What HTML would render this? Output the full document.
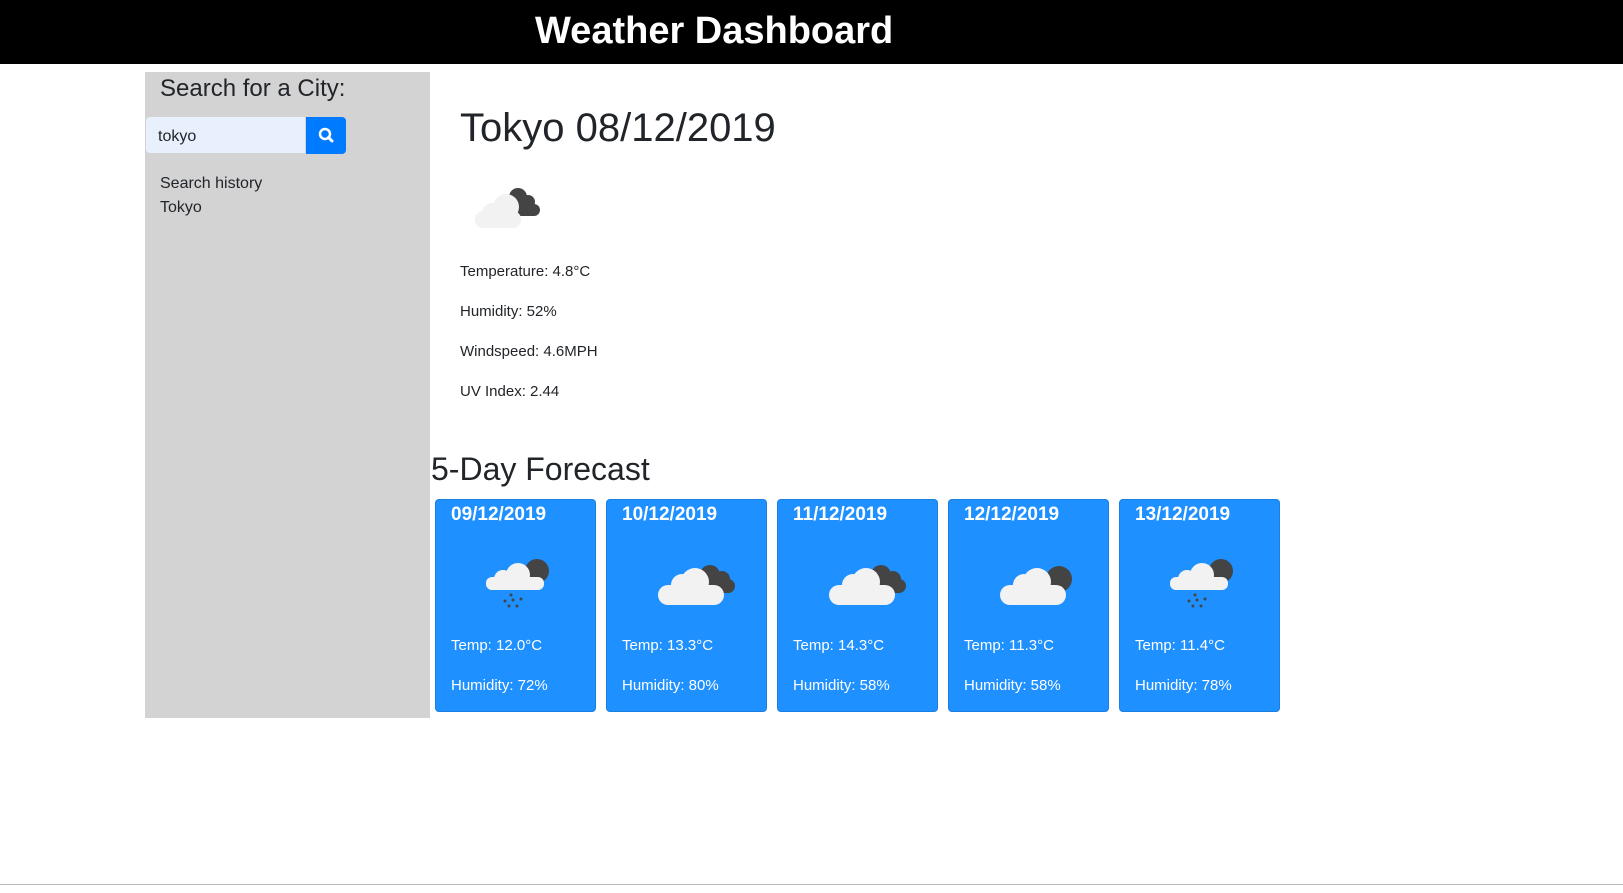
<!DOCTYPE html>
<html><head><meta charset="utf-8"><style>
*{margin:0;padding:0;box-sizing:border-box}
body{width:1623px;height:893px;font-family:"Liberation Sans",sans-serif;color:#212529;background:#fff;position:relative;overflow:hidden}
.hdr{position:absolute;left:0;top:0;width:1623px;height:64px;background:#000;color:#fff}
.hdr h1{position:absolute;left:535px;top:10px;font-size:38px;font-weight:bold;white-space:nowrap}
.side{position:absolute;left:145px;top:72px;width:285px;height:646px;background:#d3d3d3}
.side h3{position:absolute;left:15px;top:3px;font-size:24px;font-weight:normal}
.inp{position:absolute;left:1px;top:45px;width:159px;height:36px;background:#e8f0fe;border-radius:4px 0 0 4px;font-size:16px;padding:11px 12px}
.btn{position:absolute;left:161px;top:45px;width:40px;height:37px;background:#007bff;border-radius:0 4px 4px 0}
.side p{position:absolute;left:15px;font-size:16px}
.abs{position:absolute;white-space:nowrap}
.card{position:absolute;top:499px;width:161px;height:213px;background:#1e90ff;border:1px solid #1a7fe0;border-radius:4px;color:#fff}
.card .d{position:absolute;left:15px;top:4px;font-size:19px;font-weight:bold}
.card .t{position:absolute;left:15px;top:137px;font-size:15px}
.card .h{position:absolute;left:15px;top:177px;font-size:15px}
.card svg{position:absolute;left:45px;top:55px}
</style></head><body>
<div class="hdr"><h1>Weather Dashboard</h1></div>
<div class="side">
<h3>Search for a City:</h3>
<div class="inp">tokyo</div>
<div class="btn"><svg width="40" height="37" viewBox="0 0 40 37"><circle cx="19" cy="17" r="5" fill="none" stroke="#fff" stroke-width="2.5"/><line x1="22.5" y1="20.5" x2="26" y2="24" stroke="#fff" stroke-width="3" stroke-linecap="round"/></svg></div>
<p style="top:103px">Search history</p>
<p style="top:127px">Tokyo</p>
</div>
<div class="abs" style="left:460px;top:106px;font-size:40px">Tokyo 08/12/2019</div>
<svg class="abs" style="left:470px;top:183px" width="80" height="50" viewBox="0 0 80 50"><g fill="#444"><circle cx="48" cy="14" r="9"/><circle cx="58" cy="19" r="7"/><circle cx="64" cy="27" r="6"/><rect x="40" y="20" width="24" height="13"/></g><g fill="#f2f2f2"><circle cx="22" cy="30" r="10"/><circle cx="36" cy="24" r="13"/><rect x="5" y="28" width="46" height="17" rx="8"/></g></svg>
<div class="abs" style="left:460px;top:263px;font-size:15px">Temperature: 4.8°C</div>
<div class="abs" style="left:460px;top:303px;font-size:15px">Humidity: 52%</div>
<div class="abs" style="left:460px;top:343px;font-size:15px">Windspeed: 4.6MPH</div>
<div class="abs" style="left:460px;top:383px;font-size:15px">UV Index: 2.44</div>
<div class="abs" style="left:431px;top:451px;font-size:32px">5-Day Forecast</div>

<div class="card" style="left:435px"><div class="d">09/12/2019</div>
<svg width="75" height="55" viewBox="0 0 75 55"><g fill="#444"><circle cx="56" cy="16" r="12"/></g><g fill="#f2f2f2"><circle cx="22" cy="24" r="9"/><circle cx="37" cy="20" r="12"/><rect x="5" y="22" width="58" height="13" rx="6"/></g><g fill="#444"><circle cx="30" cy="40" r="1.5"/><circle cx="24" cy="46" r="1.5"/><circle cx="32" cy="45" r="1.5"/><circle cx="40" cy="44" r="1.5"/><circle cx="28" cy="51" r="1.5"/><circle cx="36" cy="51" r="1.5"/></g></svg>
<div class="t">Temp: 12.0°C</div><div class="h">Humidity: 72%</div></div>

<div class="card" style="left:606px"><div class="d">10/12/2019</div>
<svg width="90" height="55" viewBox="0 0 90 55"><g fill="#444"><circle cx="58" cy="20" r="10"/><circle cx="70" cy="24" r="8"/><circle cx="76" cy="31" r="7"/><rect x="50" y="24" width="27" height="14"/></g><g fill="#f2f2f2"><circle cx="30" cy="30" r="11"/><circle cx="43" cy="27" r="14"/><rect x="6" y="30" width="66" height="20" rx="10"/></g></svg>
<div class="t">Temp: 13.3°C</div><div class="h">Humidity: 80%</div></div>

<div class="card" style="left:777px"><div class="d">11/12/2019</div>
<svg width="90" height="55" viewBox="0 0 90 55"><g fill="#444"><circle cx="58" cy="20" r="10"/><circle cx="70" cy="24" r="8"/><circle cx="76" cy="31" r="7"/><rect x="50" y="24" width="27" height="14"/></g><g fill="#f2f2f2"><circle cx="30" cy="30" r="11"/><circle cx="43" cy="27" r="14"/><rect x="6" y="30" width="66" height="20" rx="10"/></g></svg>
<div class="t">Temp: 14.3°C</div><div class="h">Humidity: 58%</div></div>

<div class="card" style="left:948px"><div class="d">12/12/2019</div>
<svg width="90" height="55" viewBox="0 0 90 55"><g fill="#444"><circle cx="65" cy="24" r="13"/></g><g fill="#f2f2f2"><circle cx="30" cy="30" r="11"/><circle cx="43" cy="27" r="14"/><rect x="6" y="30" width="66" height="20" rx="10"/></g></svg>
<div class="t">Temp: 11.3°C</div><div class="h">Humidity: 58%</div></div>

<div class="card" style="left:1119px"><div class="d">13/12/2019</div>
<svg width="75" height="55" viewBox="0 0 75 55"><g fill="#444"><circle cx="56" cy="16" r="12"/></g><g fill="#f2f2f2"><circle cx="22" cy="24" r="9"/><circle cx="37" cy="20" r="12"/><rect x="5" y="22" width="58" height="13" rx="6"/></g><g fill="#444"><circle cx="30" cy="40" r="1.5"/><circle cx="24" cy="46" r="1.5"/><circle cx="32" cy="45" r="1.5"/><circle cx="40" cy="44" r="1.5"/><circle cx="28" cy="51" r="1.5"/><circle cx="36" cy="51" r="1.5"/></g></svg>
<div class="t">Temp: 11.4°C</div><div class="h">Humidity: 78%</div></div>

<div class="abs" style="left:0;top:884px;width:1623px;height:1px;background:#bbb"></div>
</body></html>
